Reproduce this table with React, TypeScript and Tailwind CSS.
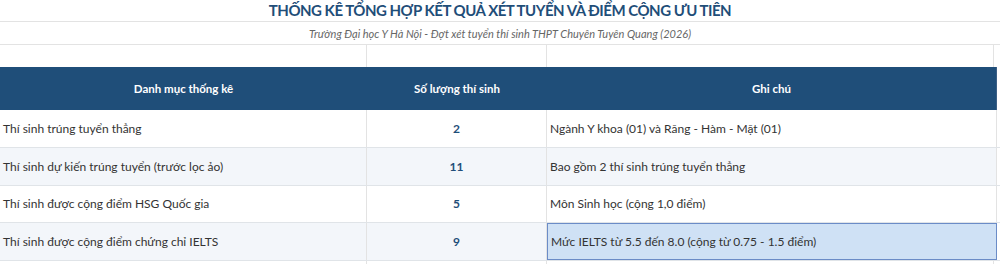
const rows = [
  { label: "Thí sinh trúng tuyển thẳng", count: "2", note: "Ngành Y khoa (01) và Răng - Hàm - Mặt (01)", h: "h-[38px]", bg: "bg-white" },
  { label: "Thí sinh dự kiến trúng tuyển (trước lọc ảo)", count: "11", note: "Bao gồm 2 thí sinh trúng tuyển thẳng", h: "h-[38px]", bg: "bg-[#f3f6fa]" },
  { label: "Thí sinh được cộng điểm HSG Quốc gia", count: "5", note: "Môn Sinh học (cộng 1,0 điểm)", h: "h-[37px]", bg: "bg-white" },
  { label: "Thí sinh được cộng điểm chứng chỉ IELTS", count: "9", note: "Mức IELTS từ 5.5 đến 8.0 (cộng từ 0.75 - 1.5 điểm)", h: "h-[38px]", bg: "bg-[#f3f6fa]", selected: true },
];

export default function App() {
  return (
    <div className="w-[1000px] h-[264px] overflow-hidden bg-white font-['Lato','Liberation_Sans',sans-serif] text-[#333]">
      <div className="h-[22px] flex items-center justify-center border-b border-[#e3e3e3]">
        <h1 className="text-[15px] font-bold text-[#1f4e79] leading-none tracking-[-0.5px]">
          THỐNG KÊ TỔNG HỢP KẾT QUẢ XÉT TUYỂN VÀ ĐIỂM CỘNG ƯU TIÊN
        </h1>
      </div>
      <div className="h-[23px] flex items-center justify-center border-b border-[#e3e3e3]">
        <p className="text-[11px] italic text-[#666] leading-none">
          Trường Đại học Y Hà Nội - Đợt xét tuyển thí sinh THPT Chuyên Tuyên Quang (2026)
        </p>
      </div>
      <div className="h-[22px] grid grid-cols-[367px_180px_447px_6px]">
        <div className="border-r border-[#e3e3e3]" />
        <div className="border-r border-[#e3e3e3]" />
        <div className="border-r border-[#e3e3e3]" />
        <div />
      </div>
      <div className="h-[43px] grid grid-cols-[367px_180px_450px_3px]">
        <div className="bg-[#1f4e79] flex items-center justify-center text-white text-[11.5px] font-bold">Danh mục thống kê</div>
        <div className="bg-[#1f4e79] flex items-center justify-center text-white text-[11.5px] font-bold">Số lượng thí sinh</div>
        <div className="bg-[#1f4e79] flex items-center justify-center text-white text-[11.5px] font-bold border-r border-[#3d5f85]">Ghi chú</div>
        <div />
      </div>
      {rows.map((r) => (
        <div key={r.label} className={`${r.h} grid grid-cols-[367px_180px_450px_3px] border-b border-[#e0e4e8] ${r.bg}`}>
          <div className="flex items-center pl-[3px] text-[12px] border-r border-[#e3e3e3]">{r.label}</div>
          <div className="flex items-center justify-center text-[12px] font-bold text-[#1f4e79] border-r border-[#e3e3e3]">{r.count}</div>
          {r.selected ? (
            <div className="flex items-center pl-[3px] text-[12px] bg-[#cfe1f5] border border-[#6b8cc7]">{r.note}</div>
          ) : (
            <div className="flex items-center pl-[3px] text-[12px] border-r border-[#e3e3e3]">{r.note}</div>
          )}
          <div className="bg-white" />
        </div>
      ))}
      <div className="h-[3px] grid grid-cols-[367px_180px_447px_6px]">
        <div className="border-r border-[#e3e3e3]" />
        <div className="border-r border-[#e3e3e3]" />
        <div className="border-r border-[#e3e3e3]" />
        <div />
      </div>
    </div>
  );
}
